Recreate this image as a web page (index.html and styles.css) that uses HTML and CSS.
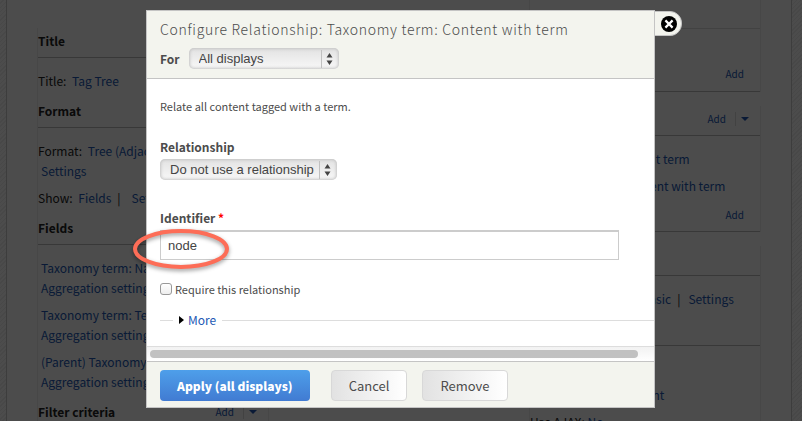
FILE: index.html
```html
<!doctype html>
<html lang="en">

<head>
  <meta charset="utf-8">
  <meta name="viewport" content="width=device-width, initial-scale=1">
  <title>Configure Relationship</title>
  <link rel="stylesheet" href="styles.css">
</head>

<body>

  <main class="page">
    <div class="columns">
      <div class="column column_first">
        <section class="bucket">
          <h3 class="bucket__header">Title</h3>
          <div class="bucket__rows">
            <div class="row">Title: <a href="#">Tag Tree</a></div>
          </div>
        </section>
        <section class="bucket">
          <h3 class="bucket__header">Format</h3>
          <div class="bucket__rows">
            <div class="row">Format: <a href="#">Tree (Adjacency model)</a><br><a href="#">Settings</a></div>
            <div class="row">Show: <a href="#">Fields</a><span class="bar">|</span><a href="#">Settings</a></div>
          </div>
        </section>
        <section class="bucket">
          <h3 class="bucket__header">Fields</h3>
          <div class="bucket__rows">
            <div class="row"><a href="#">Taxonomy term: Name</a><br><a href="#">Aggregation settings</a></div>
            <div class="row"><a href="#">Taxonomy term: Term ID</a><br><a href="#">Aggregation settings</a></div>
            <div class="row"><a href="#">(Parent) Taxonomy term</a><br><a href="#">Aggregation settings</a></div>
          </div>
        </section>
        <section class="bucket">
          <h3 class="bucket__header">Filter criteria
            <span class="actions"><a href="#">Add</a><i class="actions__arrow"></i></span>
          </h3>
        </section>
      </div>

      <div class="column"></div>

      <div class="column column_last">
        <section class="bucket">
          <h3 class="bucket__header bucket__header_top"></h3>
          <div class="bucket__single"><a href="#">Add</a></div>
        </section>
        <section class="bucket bucket_spaced">
          <h3 class="bucket__header">
            <span class="actions"><a href="#">Add</a><i class="actions__arrow"></i></span>
          </h3>
          <div class="bucket__rows">
            <div class="row"><a href="#">Taxonomy term: Parent term</a></div>
            <div class="row"><a href="#">Taxonomy term: Content with term</a></div>
          </div>
          <div class="bucket__add"><a href="#">Add</a></div>
        </section>
        <section class="bucket bucket_spaced">
          <h3 class="bucket__header"></h3>
          <div class="bucket__rows">
            <div class="row">Exposed form style: <a href="#">Basic</a><span class="bar">|</span><a href="#">Settings</a></div>
          </div>
          <h3 class="bucket__header"></h3>
          <div class="bucket__rows">
            <div class="row bucket__blank"></div>
            <div class="row">Comment: <a href="#">No comment</a></div>
            <div class="row">Use AJAX: <a href="#">No</a></div>
          </div>
        </section>
      </div>
    </div>
  </main>

  <div class="overlay">
    <div class="modal" role="dialog" aria-labelledby="modal-title">
      <button class="modal__close" type="button" aria-label="Close">
        <svg width="16" height="16" viewBox="0 0 16 16">
          <circle cx="8" cy="8" r="8" fill="#000"/>
          <path d="M4.4 4.4 11.6 11.6M11.6 4.4 4.4 11.6" stroke="#fff" stroke-width="2.2"/>
        </svg>
      </button>

      <form class="form">
        <header class="modal__header">
          <h2 class="modal__title" id="modal-title">Configure Relationship: Taxonomy term: Content with term</h2>
          <div class="for">
            <label class="label" for="override">For</label>
            <span class="select">
              <select class="select__input" id="override">
                <option selected>All displays</option>
                <option>This page (override)</option>
              </select>
              <svg class="select__arrows" width="7" height="12" viewBox="0 0 7 12"><path d="M3.5 0 6.5 4.6H.5zM3.5 12 6.5 7.4H.5z" fill="#444"/></svg>
            </span>
          </div>
        </header>

        <div class="modal__body">
          <p class="description">Relate all content tagged with a term.</p>

          <div class="field">
            <label class="label" for="relationship">Relationship</label>
            <span class="select">
              <select class="select__input" id="relationship">
                <option selected>Do not use a relationship</option>
              </select>
              <svg class="select__arrows" width="7" height="12" viewBox="0 0 7 12"><path d="M3.5 0 6.5 4.6H.5zM3.5 12 6.5 7.4H.5z" fill="#444"/></svg>
            </span>
          </div>

          <div class="field field_identifier">
            <label class="label" for="identifier">Identifier <span class="required">*</span></label>
            <div class="marked">
              <input class="text" id="identifier" type="text" value="node">
              <svg class="marked__ring" width="104" height="50" viewBox="0 0 104 50">
                <ellipse cx="52" cy="24" rx="46" ry="18" fill="none" stroke="#fd6d57" stroke-width="4"/>
              </svg>
            </div>
          </div>

          <div class="check">
            <input class="check__box" id="required" type="checkbox">
            <label for="required">Require this relationship</label>
          </div>

          <div class="more"><a class="more__link" href="#">More</a></div>
        </div>

        <div class="scrollbar"><div class="scrollbar__thumb"></div></div>

        <footer class="modal__footer">
          <button class="button button_primary" type="button">Apply (all displays)</button>
          <button class="button" type="button">Cancel</button>
          <button class="button button_last" type="button">Remove</button>
        </footer>
      </form>
    </div>
  </div>

</body>

</html>
```
FILE: styles.css
```css
*,
*::before,
*::after {
  box-sizing: border-box;
}

body {
  margin: 0;
  height: 100vh;
  overflow: hidden;
  padding: 0 10px 0 6px;
  font-family: "Noto Sans CJK SC", "Open Sans", sans-serif;
  font-size: 12px;
  line-height: 20px;
  color: #222;
  background: repeating-linear-gradient(135deg, #fff 0, #fff 2px, #f0f0f0 2px, #f0f0f0 3px);
}

a {
  color: #2259b5;
  text-decoration: none;
}

h2,
h3,
p {
  margin: 0;
}

.page {
  padding: 0 30px;
  background-color: #fff;
  border: solid #ccc;
  border-width: 0 1px;
}

.columns {
  display: grid;
  grid-template-columns: 1fr 1fr 1fr;
  gap: 14px;
}

.column_first {
  margin-top: 28px;
  border: 1px solid #eee;
  border-width: 0 1px;
}

.bucket__header {
  display: flex;
  justify-content: space-between;
  align-items: center;
  height: 30px;
  padding-bottom: 3px;
  font-size: 12px;
  font-weight: 700;
  border-bottom: 1px solid #bbb;
}

.bucket__rows {
  padding: 13px 0 7px;
}

.row {
  white-space: nowrap;
}

.row + .row {
  margin-top: 7px;
}

.row a {
  margin-left: 3px;
}

.bar {
  margin: 0 8px 0 6px;
}

.column_last .bucket {
  border: solid #eee;
  border-width: 0 1px;
}

.column_last .row a {
  margin-left: 0;
}

.bucket_spaced {
  margin-top: 14px;
}

.bucket__header_top {
  height: 29px;
  border-bottom-color: #ddd;
}

.bucket__single,
.bucket__add {
  display: flex;
  justify-content: flex-end;
  align-items: center;
  height: 29px;
  padding-right: 16px;
  padding-bottom: 5px;
  font-size: 10px;
  border-bottom: 1px solid #bbb;
}

.bucket__single {
  height: 63px;
  padding-top: 32px;
}

.bucket__blank {
  height: 19px;
}

.actions {
  display: flex;
  align-items: center;
  margin-left: auto;
  font-size: 10px;
  font-weight: 400;
}

.actions__arrow {
  display: flex;
  align-items: center;
  height: 14px;
  margin-left: 9px;
  padding: 0 11px 0 5px;
  border-left: 1px solid #ddd;
}

.actions__arrow::after {
  content: "";
  border: 4px solid transparent;
  border-top-color: #2259b5;
  border-bottom: 0;
}

.overlay {
  position: fixed;
  inset: 0;
  display: flex;
  align-items: flex-start;
  padding: 10px 147px 0 146px;
  background-color: rgba(0, 0, 0, 0.7);
}

.modal {
  position: relative;
  flex: 1;
  color: #4c4c4c;
  background-color: #fff;
  border: 1px solid #c4c4c4;
}

.modal__close {
  position: absolute;
  top: 0;
  left: 100%;
  display: flex;
  align-items: center;
  width: 28px;
  height: 25px;
  padding: 0 0 0 6px;
  background-color: #f3f4ee;
  border: 1px solid #c4c4c4;
  border-radius: 0 12px 12px 0;
}

.modal__header {
  padding: 8px 13px 9px;
  background-color: #f3f4ee;
  border-bottom: 1px solid #c4c4c4;
}

.modal__title {
  font-size: 14px;
  font-weight: 300;
  line-height: 20px;
  letter-spacing: 0.05em;
}

.for {
  display: flex;
  align-items: center;
  gap: 9px;
  margin-top: 9px;
}

.label {
  display: block;
  font-weight: 700;
}

.select {
  position: relative;
  display: inline-flex;
}

.select__input {
  height: 21px;
  padding: 0 26px 0 10px;
  font-family: "Liberation Sans", sans-serif;
  font-size: 13px;
  color: #444;
  appearance: none;
  background: linear-gradient(#e2e2e2, #f8f8f8);
  border: 0;
  border-radius: 5px;
  box-shadow: inset 0 0 3px 1px #c4c4c4;
}

.for .select__input {
  width: 150px;
}

.field .select__input {
  width: 177px;
  padding-right: 20px;
}

.select__arrows {
  position: absolute;
  top: 5px;
  right: 6px;
}

.select::after {
  content: "";
  position: absolute;
  top: 2px;
  bottom: 1px;
  right: 17px;
  border-left: 1px solid #c0c0c0;
}

.modal__body {
  padding: 17px 0 16px 13px;
}

.description,
.check {
  font-size: 11px;
}

.field {
  margin-top: 21px;
}

.field .select {
  display: flex;
  width: max-content;
  margin-top: 2px;
}

.field_identifier {
  margin-top: 28px;
}

.required {
  color: #f00;
}

.marked {
  position: relative;
  margin: 2px 35px 0 0;
}

.text {
  display: block;
  width: 100%;
  height: 30px;
  padding: 0 7px;
  font-family: "Liberation Sans", sans-serif;
  font-size: 13px;
  color: #444;
  background-color: #fff;
  border: 1px solid #ccc;
  border-top-width: 2px;
}

.marked__ring {
  position: absolute;
  top: -5px;
  left: -31px;
  filter: drop-shadow(0 2px 2px rgba(0, 0, 0, 0.4));
  pointer-events: none;
}

.check {
  display: flex;
  align-items: center;
  gap: 3px;
  margin-top: 19px;
}

.check__box {
  width: 12px;
  height: 12px;
  margin: 0;
  appearance: none;
  background: linear-gradient(#fff, #eee);
  border: 1px solid #999;
  border-radius: 3px;
}

.more {
  display: flex;
  align-items: center;
  gap: 6px;
  margin-top: 11px;
}

.more::before,
.more::after {
  content: "";
  width: 13px;
  border-top: 1px solid #ddd;
}

.more::after {
  flex: 1;
}

.more__link {
  display: flex;
  align-items: center;
  gap: 4px;
}

.more__link::before {
  content: "";
  border: 4px solid transparent;
  border-left: 5px solid #000;
  border-right: 0;
}

.scrollbar {
  height: 15px;
  padding: 3px 16px 3px 3px;
  background: linear-gradient(#f2f2f2, #fff);
  border-top: 1px solid #ddd;
}

.scrollbar__thumb {
  height: 8px;
  background-color: #c1c1c1;
  border-radius: 4px;
}

.modal__footer {
  display: flex;
  padding: 8px 13px 6px;
  background-color: #f3f4ee;
  border-top: 1px solid #c4c4c4;
}

.button {
  height: 31px;
  margin-left: 21px;
  padding: 0 17px;
  font-family: inherit;
  font-size: 13px;
  color: #4c4c4c;
  background: linear-gradient(90deg, #e2e2e2, #fff);
  border: 1px solid #d8d8d8;
  border-radius: 4px;
}

.button_primary {
  margin-left: 0;
  font-size: 12px;
  font-weight: 900;
  color: #fff;
  background: linear-gradient(#4e9fea, #417bd2);
  border: 0;
}

.button_last {
  margin-left: 15px;
}
```
